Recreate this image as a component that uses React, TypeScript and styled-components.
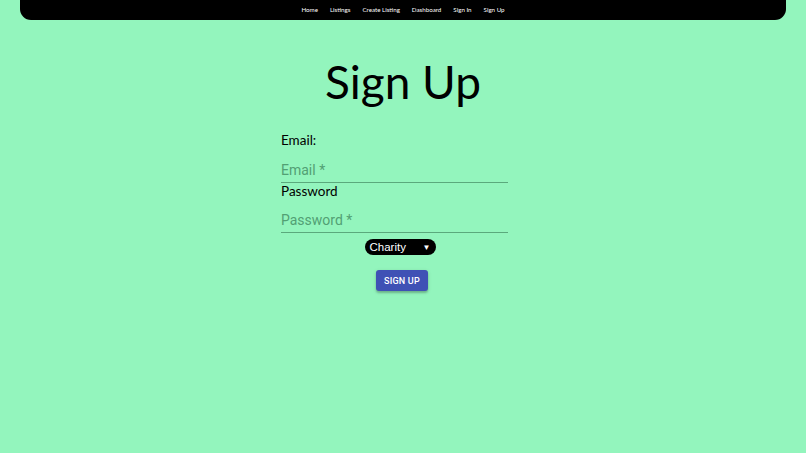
import React from "react";
import styled, { createGlobalStyle } from "styled-components";

const GlobalStyle = createGlobalStyle`
  html, body {
    margin: 0;
    padding: 0;
    background: #93f5bd;
    font-family: Lato, "Open Sans", sans-serif;
  }
`

const Page = styled.div`
  min-height: 453px;
  display: flex;
  flex-direction: column;
  align-items: center;
`
const NavBar = styled.nav`
  width: 766px;
  height: 20px;
  background: #000;
  border-radius: 0 0 11px 11px;
  display: flex;
  justify-content: center;
  align-items: center;
  gap: 12px;
  > a{
    color: #fff;
    font-size: 6.2px;
    text-decoration: none;
    line-height: 1;
    margin-top: 1px;
  }
`
const Title = styled.h1`
  margin: 39px 0 0;
  font-size: 46px;
  font-weight: 400;
  line-height: 46px;
  color: #000;
`
const Form = styled.form`
  width: 244px;
  margin-top: 27px;
  display: flex;
  flex-direction: column;
`
const Label = styled.label`
  font-size: 13.5px;
  line-height: 17px;
  color: #000;
`
const Field = styled.div<{ top: number }>`
  width: 227px;
  margin-top: ${p => p.top}px;
  border-bottom: 1px solid #5aa97c;
  height: 20px;
  box-sizing: content-box;
  display: flex;
  align-items: flex-end;
  > input{
    width: 100%;
    border: none;
    outline: none;
    background: transparent;
    padding: 0 0 4px;
    font-family: Roboto, "Liberation Sans", sans-serif;
    font-size: 14px;
    line-height: 16px;
    height: 16px;
    color: #000;
    &::placeholder{
      color: #52a074;
    }
  }
`
const Center = styled.div`
  display: flex;
  flex-direction: column;
  align-items: center;
`
const Select = styled.div`
  margin: 6px 6px 0 0;
  width: 71px;
  height: 16px;
  background: #000;
  color: #fff;
  border-radius: 8px;
  box-sizing: border-box;
  padding: 0 5px 0 5px;
  display: flex;
  justify-content: space-between;
  align-items: center;
  font-family: "Liberation Sans", Arial, sans-serif;
  font-size: 11.5px;
  > span.arrow{
    font-size: 8px;
  }
`
const Button = styled.button`
  margin: 15px 2px 0 0;
  width: 52px;
  height: 21px;
  border: none;
  border-radius: 3px;
  background: #3f51b5;
  color: #fff;
  font-family: Roboto, "Liberation Sans", sans-serif;
  font-size: 9px;
  font-weight: 500;
  letter-spacing: 0.2px;
  box-shadow: 0 2px 2px rgba(0,0,0,0.2), 0 1px 4px rgba(0,0,0,0.12);
  padding: 0;
`

function App() {
  const links = ["Home", "Listings", "Create Listing", "Dashboard", "Sign In", "Sign Up"]
  return (
    <Page>
      <GlobalStyle />
      <NavBar>
        {links.map(l => <a key={l} href="#">{l}</a>)}
      </NavBar>
      <Title>Sign Up</Title>
      <Form onSubmit={e => e.preventDefault()}>
        <Label>Email:</Label>
        <Field top={13}>
          <input placeholder="Email *" />
        </Field>
        <Label>Password</Label>
        <Field top={12}>
          <input type="password" placeholder="Password *" />
        </Field>
        <Center>
          <Select>
            <span>Charity</span>
            <span className="arrow">▼</span>
          </Select>
          <Button type="submit">SIGN UP</Button>
        </Center>
      </Form>
    </Page>
  );
}

export default App
